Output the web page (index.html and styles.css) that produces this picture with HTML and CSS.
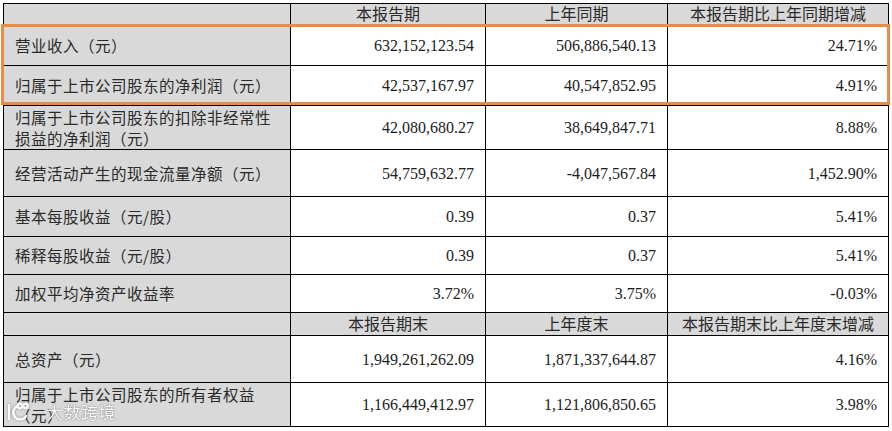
FILE: index.html
```html
<!DOCTYPE html>
<html lang="zh-CN">
<head>
<meta charset="utf-8">
<title>主要会计数据</title>
<link rel="stylesheet" href="styles.css">
</head>
<body>
<div class="wrap">
  <table class="fin">
    <colgroup>
      <col class="c1"><col class="c2"><col class="c3"><col class="c4">
    </colgroup>
    <tbody>
      <tr class="h22"><th class="lab"></th><th>本报告期</th><th>上年同期</th><th>本报告期比上年同期增减</th></tr>
      <tr class="h40"><td class="lab">营业收入（元）</td><td>632,152,123.54</td><td>506,886,540.13</td><td>24.71%</td></tr>
      <tr class="h40"><td class="lab">归属于上市公司股东的净利润（元）</td><td>42,537,167.97</td><td>40,547,852.95</td><td>4.91%</td></tr>
      <tr class="h44"><td class="lab">归属于上市公司股东的扣除非经常性<br>损益的净利润（元）</td><td>42,080,680.27</td><td>38,649,847.71</td><td>8.88%</td></tr>
      <tr class="h47"><td class="lab">经营活动产生的现金流量净额（元）</td><td>54,759,632.77</td><td>-4,047,567.84</td><td>1,452.90%</td></tr>
      <tr class="h40"><td class="lab">基本每股收益（元/股）</td><td>0.39</td><td>0.37</td><td>5.41%</td></tr>
      <tr class="h38"><td class="lab">稀释每股收益（元/股）</td><td>0.39</td><td>0.37</td><td>5.41%</td></tr>
      <tr class="h38"><td class="lab">加权平均净资产收益率</td><td>3.72%</td><td>3.75%</td><td>-0.03%</td></tr>
      <tr class="h23"><th class="lab"></th><th>本报告期末</th><th>上年度末</th><th>本报告期末比上年度末增减</th></tr>
      <tr class="h47"><td class="lab">总资产（元）</td><td>1,949,261,262.09</td><td>1,871,337,644.87</td><td>4.16%</td></tr>
      <tr class="h44"><td class="lab">归属于上市公司股东的所有者权益<br>（元）</td><td>1,166,449,412.97</td><td>1,121,806,850.65</td><td>3.98%</td></tr>
    </tbody>
  </table>
  <div class="highlight"></div>
  <div class="watermark">
    <svg class="wm-logo" width="24" height="20" viewBox="0 0 24 20">
      <g fill="none" stroke="#ffffff" stroke-width="2.4" stroke-linecap="round">
        <path d="M3 3 V17"/>
        <path d="M11 4 C6 8 6 13 11 17"/>
        <circle cx="14" cy="4" r="2.2"/>
        <circle cx="19.5" cy="4" r="2.2"/>
        <path d="M12 17 C15 18 19 17 20 14"/>
      </g>
    </svg>
    <span class="wm-text">大数跨境</span>
  </div>
</div>
</body>
</html>
```

FILE: styles.css
```css
html, body {
  margin: 0;
  padding: 0;
  background: #ffffff;
}

.wrap {
  position: relative;
  width: 892px;
  height: 431px;
  padding: 3px 0 0 3px;
  box-sizing: border-box;
}

.fin {
  border-collapse: collapse;
  table-layout: fixed;
  width: 886px;
  font-family: "Liberation Serif", "Noto Sans CJK SC", serif;
  font-size: 16px;
  line-height: 21px;
  color: #1c1c1c;
}

.c1 { width: 287px; }
.c2 { width: 195px; }
.c3 { width: 182px; }
.c4 { width: 221px; }

.fin th,
.fin td {
  border: 1px solid #000000;
  padding: 0 11px 0 11px;
  vertical-align: middle;
  white-space: nowrap;
}

.fin th {
  background: #d9d9d9;
  font-weight: normal;
  text-align: center;
  color: #2a2a2a;
}

.fin td {
  text-align: right;
}

.fin td.lab {
  text-align: left;
  background: #d9d9d9;
  font-family: "Noto Sans CJK SC", "Liberation Serif", sans-serif;
  font-size: 15.5px;
  letter-spacing: 0.5px;
  color: #2a2a2a;
}

.h22 > * { height: 21px; }
.h23 > * { height: 22px; }
.h38 > * { height: 37px; }
.h40 > * { height: 39px; }
.h44 > * { height: 43px; }
.h47 > * { height: 46px; }

.highlight {
  position: absolute;
  left: 1px;
  top: 24px;
  width: 889px;
  height: 81px;
  border: 3px solid #ea8c47;
  box-sizing: border-box;
  pointer-events: none;
}

.watermark {
  position: absolute;
  left: 6px;
  top: 402px;
  display: flex;
  align-items: center;
  gap: 16px;
  opacity: 0.92;
}

.wm-logo {
  display: block;
  filter: drop-shadow(0 0 1px rgba(0, 0, 0, 0.45));
}

.wm-text {
  font-family: "Noto Sans CJK SC", sans-serif;
  font-size: 17px;
  line-height: 20px;
  color: #ffffff;
  letter-spacing: 0.5px;
  text-shadow: 0 0 1px rgba(0, 0, 0, 0.55), 0 0 2px rgba(0, 0, 0, 0.3);
}
```
